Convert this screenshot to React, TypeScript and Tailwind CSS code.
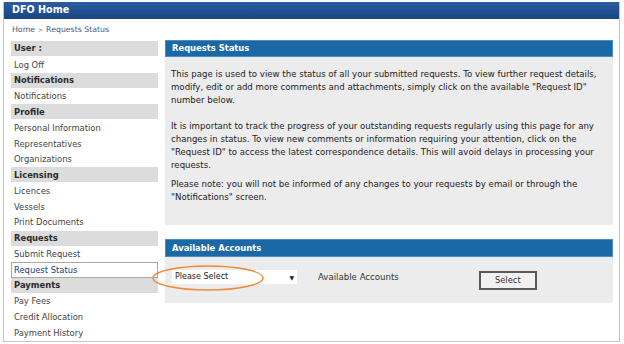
import React from 'react';

type NavGroup = { title: string; items: string[] };

const groups: NavGroup[] = [
  { title: 'User :', items: ['Log Off'] },
  { title: 'Notifications', items: ['Notifications'] },
  { title: 'Profile', items: ['Personal Information', 'Representatives', 'Organizations'] },
  { title: 'Licensing', items: ['Licences', 'Vessels', 'Print Documents'] },
  { title: 'Requests', items: ['Submit Request', 'Request Status'] },
  { title: 'Payments', items: ['Pay Fees', 'Credit Allocation', 'Payment History'] },
];

function Sidebar() {
  return (
    <div className="w-[147px] shrink-0 flex flex-col pt-[1px]">
      {groups.map((g) => (
        <div key={g.title} className="flex flex-col">
          <div className="h-[15px] mb-[1px] bg-[#dcdcdc] pl-[3px] flex items-center text-[8.4px] font-bold text-[#2b2b2b]">
            {g.title}
          </div>
          {g.items.map((item) =>
            item === 'Request Status' ? (
              <div
                key={item}
                className="h-[15.7px] border border-[#a8a8a8] bg-white pl-[2px] flex items-center text-[8.4px] text-[#1f3d78]"
              >
                {item}
              </div>
            ) : (
              <div key={item} className="h-[15.7px] pl-[3px] flex items-center text-[8.4px] text-[#444]">
                {item}
              </div>
            )
          )}
        </div>
      ))}
    </div>
  );
}

function PanelHeader({ title, tall }: { title: string; tall?: boolean }) {
  return (
    <div
      className={`${tall ? 'h-[18px]' : 'h-[17px]'} bg-[#1b68a6] border border-[#4a8cc4] pl-[6px] flex items-center text-[8.4px] font-bold text-white`}
    >
      {title}
    </div>
  );
}

export default function App() {
  return (
    <div className="w-[624px] h-[344px] bg-white pt-[2px] pl-[3px] font-['DejaVu_Sans',Verdana,sans-serif] overflow-hidden">
      <div className="w-[617px] h-[340px] border border-[#c4c4c4] border-t-0 flex flex-col">
        {/* top bar */}
        <div className="h-[17px] bg-gradient-to-b from-[#2a5da0] to-[#1a4684] pl-[8px] flex items-center text-[9.6px] font-bold text-white">
          DFO Home
        </div>

        {/* breadcrumb */}
        <div className="h-[21px] pl-[8px] flex items-center text-[7.8px] text-[#3b5a80]">
          Home <span className="mx-[3px] text-[6px]">&gt;</span> Requests Status
        </div>

        <div className="flex flex-1 pl-[7px] gap-[7px]">
          <Sidebar />

          <div className="w-[448px] flex flex-col relative">
            <PanelHeader title="Requests Status" />
            <div className="h-[168px] bg-[#ececec] pl-[6px] pr-[2px] pt-[11px] text-[8.6px] leading-[13px] text-[#222]">
              <p>
                This page is used to view the status of all your submitted requests. To view further request details,
                <br />
                modify, edit or add more comments and attachments, simply click on the available "Request ID"
                <br />
                number below.
              </p>
              <p className="mt-[13px]">
                It is important to track the progress of your outstanding requests regularly using this page for any
                <br />
                changes in status. To view new comments or information requiring your attention, click on the
                <br />
                "Request ID" to access the latest correspondence details. This will avoid delays in processing your
                <br />
                requests.
              </p>
              <p className="mt-[6px]">
                Please note: you will not be informed of any changes to your requests by email or through the
                <br />
                "Notifications" screen.
              </p>
            </div>

            <div className="mt-[14px]">
              <PanelHeader title="Available Accounts" tall />
              <div className="h-[46px] bg-[#ececec] flex items-start pt-[13px] pl-[7px]">
                <div className="w-[125px] h-[14px] bg-white flex items-center justify-between pl-[3px] pr-[3px] text-[8px] text-[#222]">
                  <span>Please Select</span>
                  <span className="text-[6px]">▼</span>
                </div>
                <div className="ml-[21px] h-[14px] flex items-center text-[8.6px] text-[#333]">Available Accounts</div>
                <div className="ml-[80px] mt-[1px] w-[58px] h-[19px] border-2 border-[#5a5a5a] bg-[#f2f2f2] flex items-center justify-center text-[8.4px] text-[#333]">
                  Select
                </div>
              </div>
            </div>

            {/* annotation ellipse */}
            <svg className="absolute left-[-14px] top-[224px]" width="114" height="28" viewBox="0 0 114 28">
              <ellipse cx="57" cy="14" rx="55" ry="12" fill="none" stroke="#f0893a" strokeWidth="1.4" />
            </svg>
          </div>
        </div>
      </div>
    </div>
  );
}
